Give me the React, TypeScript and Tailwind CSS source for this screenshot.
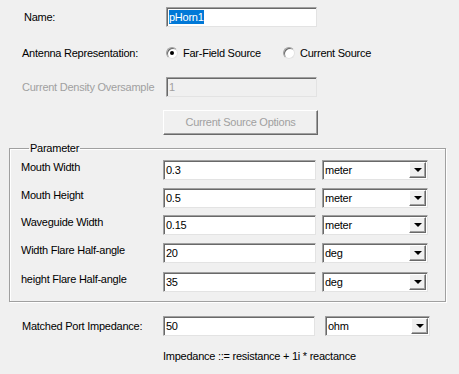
import React from 'react';

const sunken =
  'border border-t-[#a0a0a0] border-l-[#a0a0a0] border-b-[#e3e3e3] border-r-[#e3e3e3] shadow-[inset_1px_1px_0_#696969]';
const raised =
  'border border-t-white border-l-white border-b-[#696969] border-r-[#696969] shadow-[inset_-1px_-1px_0_#a0a0a0]';

const TextBox: React.FC<{ value: string; w: string; disabled?: boolean; selected?: boolean }> = ({
  value,
  w,
  disabled,
  selected,
}) => (
  <div
    className={`${w} h-[20px] ${sunken} ${disabled ? 'bg-[#f0f0f0] text-[#a0a0a0]' : 'bg-white text-black'} flex items-center pl-[2px]`}
  >
    {selected ? <span className="bg-[#0078d7] text-white leading-[14px]">{value}</span> : <span>{value}</span>}
  </div>
);

const Combo: React.FC<{ value: string; w: string }> = ({ value, w }) => (
  <div className={`${w} h-[20px] ${sunken} bg-white flex items-center justify-between pl-[2px] pr-[1px]`}>
    <span>{value}</span>
    <div className={`w-[17px] h-[16px] bg-[#f0f0f0] ${raised} flex items-center justify-center`}>
      <div className="w-0 h-0 border-l-[4px] border-r-[4px] border-t-[4px] border-l-transparent border-r-transparent border-t-black" />
    </div>
  </div>
);

const Radio: React.FC<{ checked?: boolean }> = ({ checked }) => (
  <div className="w-[12px] h-[12px] rounded-full bg-white border border-t-[#a0a0a0] border-l-[#a0a0a0] border-b-[#e3e3e3] border-r-[#e3e3e3] shadow-[inset_1px_1px_0_#696969] flex items-center justify-center">
    {checked && <div className="w-[4px] h-[4px] rounded-full bg-black" />}
  </div>
);

const PARAMS = [
  { label: 'Mouth Width', value: '0.3', unit: 'meter', mt: 'mt-[5px]' },
  { label: 'Mouth Height', value: '0.5', unit: 'meter', mt: 'mt-[8px]' },
  { label: 'Waveguide Width', value: '0.15', unit: 'meter', mt: 'mt-[7px]' },
  { label: 'Width Flare Half-angle', value: '20', unit: 'deg', mt: 'mt-[8px]' },
  { label: 'height Flare Half-angle', value: '35', unit: 'deg', mt: 'mt-[9px]' },
];

export default function App() {
  return (
    <div className="w-[459px] h-[374px] bg-[#f0f0f0] text-black text-[11px] leading-[13px] tracking-[-0.25px] font-['Liberation_Sans',Arial,sans-serif] flex flex-col overflow-hidden">
      <div className="mt-[7px] flex items-center">
        <div className="w-[166px] pl-[24px]">Name:</div>
        <TextBox value="pHorn1" w="w-[151px]" selected />
      </div>

      <div className="mt-[16px] h-[20px] flex items-center">
        <div className="w-[166px] pl-[22px]">Antenna Representation:</div>
        <div className="w-[117px] flex items-center gap-[5px]">
          <Radio checked />
          <span>Far-Field Source</span>
        </div>
        <div className="flex items-center gap-[5px]">
          <Radio />
          <span>Current Source</span>
        </div>
      </div>

      <div className="mt-[14px] flex items-center">
        <div className="w-[166px] pl-[22px] text-[#a0a0a0]">Current Density Oversample</div>
        <TextBox value="1" w="w-[151px]" disabled />
      </div>

      <div className="mt-[13px] ml-[163px]">
        <div className={`w-[155px] h-[25px] ${raised} flex items-center justify-center text-[#a0a0a0]`}>
          Current Source Options
        </div>
      </div>

      <fieldset className="mt-[7px] ml-[9px] w-[437px] border border-[#a0a0a0] shadow-[inset_1px_1px_0_white,1px_1px_0_white] pl-[11px] pb-[9px]">
        <legend className="ml-[8px] px-[1px]">Parameter</legend>
        {PARAMS.map((p) => (
          <div key={p.label} className={`${p.mt} flex items-start`}>
            <div className="w-[142px] pt-[1px]">{p.label}</div>
            <TextBox value={p.value} w="w-[153px]" />
            <div className="ml-[6px]">
              <Combo value={p.unit} w="w-[106px]" />
            </div>
          </div>
        ))}
      </fieldset>

      <div className="mt-[14px] flex items-center">
        <div className="w-[163px] pl-[22px]">Matched Port Impedance:</div>
        <TextBox value="50" w="w-[152px]" />
        <div className="ml-[10px]">
          <Combo value="ohm" w="w-[105px]" />
        </div>
      </div>

      <div className="mt-[14px] ml-[163px]">Impedance ::= resistance + 1i * reactance</div>
    </div>
  );
}
